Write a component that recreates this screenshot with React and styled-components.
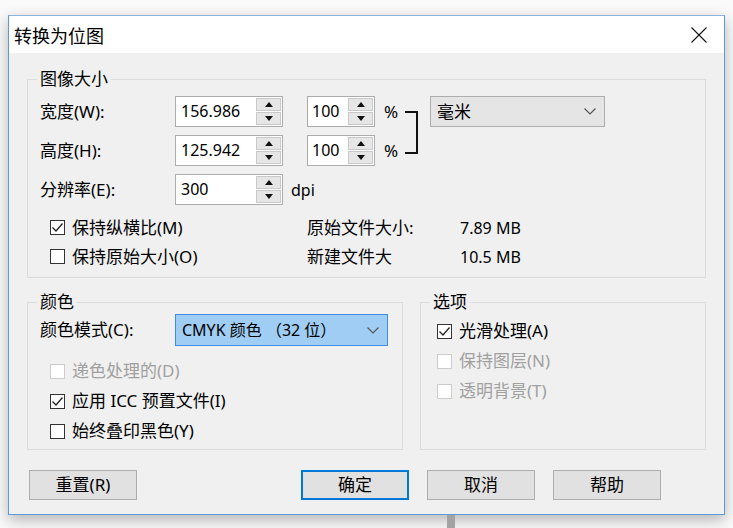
import React from 'react';
import styled, { createGlobalStyle } from 'styled-components';

const GlobalStyle = createGlobalStyle`
  html, body {
    margin: 0;
    padding: 0;
    background: #fafafa;
  }
  body {
    font-family: "Noto Sans", "Noto Sans CJK SC", sans-serif;
    color: #000;
  }
`

const Page = styled.div`
  width: 733px;
  height: 528px;
  overflow: hidden;
  padding-top: 15px;
  box-sizing: border-box;
`

const Dialog = styled.div`
  margin-left: 8px;
  width: 717px;
  box-sizing: border-box;
  border: 1px solid #5a9ad8;
  border-top-color: #8fb2d6;
  background: #f0f0f0;
  box-shadow: 0 5px 14px rgba(0,0,0,0.28);
`

const TitleBar = styled.div`
  height: 37px;
  background: #fff;
  display: flex;
  align-items: center;
  justify-content: space-between;
  padding: 0 17px 0 5px;
`

const Title = styled.div`
  font-family: "Noto Sans CJK SC", sans-serif;
  font-size: 18px;
  line-height: 22px;
`

const Body = styled.div`
  padding: 16px 18px 14px 18px;
  display: flex;
  flex-direction: column;
`

const Group = styled.fieldset`
  margin: 0;
  padding: ${p => p.$pad || '7px 0 6px 12px'};
  border: 1px solid #dcdcdc;
  min-width: 0;
  box-sizing: border-box;
  width: ${p => p.$w}px;
  height: ${p => p.$h ? p.$h + 'px' : 'auto'};
`

const Legend = styled.legend`
  padding: 0 3px;
  margin-left: -3px;
  font-size: 17px;
  line-height: 20px;
`

const SizeGrid = styled.div`
  display: grid;
  grid-template-columns: 135px 132px 77px 21px 25px 175px;
  grid-template-rows: 31px 31px 31px;
  row-gap: 8px;
  align-items: center;
`

const Label = styled.div`
  font-size: ${p => p.$size || 17}px;
  line-height: 20px;
  color: ${p => p.$disabled ? '#a0a0a0' : '#000'};
  white-space: nowrap;
`

const SpinBox = styled.div`
  width: ${p => p.$w}px;
  height: 31px;
  box-sizing: border-box;
  border: 1px solid #acacac;
  background: #fff;
  display: flex;
  align-items: stretch;
`

const SpinText = styled.div`
  flex: 1;
  padding-left: ${p => p.$small ? 4 : 5}px;
  font-size: 16px;
  line-height: 29px;
`

const SpinBtns = styled.div`
  width: 25px;
  margin: 1px;
  display: flex;
  flex-direction: column;
  gap: 1px;
`

const SpinHalf = styled.div`
  flex: 1;
  background: #e6e6e6;
  border: 1px solid #c9c9c9;
  display: flex;
  align-items: center;
  justify-content: center;
`

const Cell = styled.div`
  display: flex;
  align-items: center;
  gap: ${p => p.$gap || 0}px;
  grid-column: ${p => p.$col || 'auto'};
  grid-row: ${p => p.$row || 'auto'};
  align-self: ${p => p.$self || 'center'};
`

const Percent = styled.div`
  font-size: 17px;
  line-height: 20px;
`

const Bracket = styled.div`
  width: 11px;
  height: 39px;
  margin-top: 15px;
  border: 2px solid #111;
  border-left: none;
`

const Select = styled.div`
  width: ${p => p.$w}px;
  height: ${p => p.$h || 31}px;
  box-sizing: border-box;
  border: 1px solid ${p => p.$active ? '#3d8ee2' : '#adadad'};
  background: ${p => p.$active ? '#9fcdf3' : '#e5e5e5'};
  display: flex;
  align-items: center;
  justify-content: space-between;
  padding: 0 8px 0 6px;
  font-size: ${p => p.$size || 17}px;
  line-height: 20px;
  white-space: nowrap;
`

const InfoGrid = styled.div`
  display: grid;
  grid-template-columns: 267px 153px auto;
  grid-auto-rows: 29px;
  align-items: center;
  margin-top: 8px;
`

const CheckRow = styled.div`
  display: flex;
  align-items: center;
  gap: 7px;
  padding-left: ${p => p.$indent ?? 10}px;
  height: ${p => p.$h || 30}px;
`

const Box = styled.span`
  width: 15px;
  height: 15px;
  box-sizing: border-box;
  border: 1px solid ${p => p.$disabled ? '#cccccc' : '#333'};
  background: #fff;
  display: flex;
  align-items: center;
  justify-content: center;
`

const BottomGroups = styled.div`
  display: flex;
  gap: 17px;
  margin-top: 14px;
`

const ModeRow = styled.div`
  display: grid;
  grid-template-columns: 135px auto;
  align-items: center;
  margin-bottom: 10px;
`

const Buttons = styled.div`
  display: flex;
  margin-top: 20px;
  gap: 18px;
  padding-left: 2px;
`

const Button = styled.div`
  width: 108px;
  height: 30px;
  box-sizing: border-box;
  border: ${p => p.$primary ? '2px solid #0078d7' : '1px solid #adadad'};
  background: #e1e1e1;
  display: flex;
  align-items: center;
  justify-content: center;
  font-size: 17px;
  line-height: 20px;
  margin-right: ${p => p.$push ? 146 : 0}px;
`

const Behind = styled.div`
  margin-left: 447px;
  width: 8px;
  height: 40px;
  background: #a3a3a3;
`

const Up = () => (
  <svg width="8" height="5" viewBox="0 0 8 5"><polygon points="4,0 8,5 0,5" fill="#111" /></svg>
)
const Down = () => (
  <svg width="8" height="5" viewBox="0 0 8 5"><polygon points="0,0 8,0 4,5" fill="#111" /></svg>
)

const Spin = ({ value, w, small }) => (
  <SpinBox $w={w}>
    <SpinText $small={small}>{value}</SpinText>
    <SpinBtns>
      <SpinHalf><Up /></SpinHalf>
      <SpinHalf><Down /></SpinHalf>
    </SpinBtns>
  </SpinBox>
)

const Chevron = () => (
  <svg width="12" height="7" viewBox="0 0 12 7">
    <polyline points="0.5,0.5 6,6 11.5,0.5" fill="none" stroke="#555" strokeWidth="1.2" />
  </svg>
)

const Check = ({ checked, disabled, children, indent }) => (
  <CheckRow $indent={indent}>
    <Box $disabled={disabled}>
      {checked && (
        <svg width="13" height="13" viewBox="0 0 13 13">
          <polyline points="1.5,6.5 5,10 11.5,2.5" fill="none" stroke="#222" strokeWidth="1.3" />
        </svg>
      )}
    </Box>
    <Label $disabled={disabled}>{children}</Label>
  </CheckRow>
)

export default function App() {
  return (
    <Page>
      <GlobalStyle />
      <Dialog>
        <TitleBar>
          <Title>转换为位图</Title>
          <svg width="16" height="16" viewBox="0 0 16 16">
            <path d="M0.5 0.5 L15.5 15.5 M15.5 0.5 L0.5 15.5" stroke="#111" strokeWidth="1.1" />
          </svg>
        </TitleBar>
        <Body>
          <Group $w={679}>
            <Legend>图像大小</Legend>
            <SizeGrid>
              <Cell $col="1" $row="1"><Label>宽度(W):</Label></Cell>
              <Cell $col="2" $row="1"><Spin value="156.986" w={108} /></Cell>
              <Cell $col="3" $row="1"><Spin value="100" w={68} small /></Cell>
              <Cell $col="4" $row="1"><Percent>%</Percent></Cell>
              <Cell $col="5" $row="1 / span 2" $self="start"><Bracket /></Cell>
              <Cell $col="6" $row="1"><Select $w={175}>毫米<Chevron /></Select></Cell>

              <Cell $col="1" $row="2"><Label>高度(H):</Label></Cell>
              <Cell $col="2" $row="2"><Spin value="125.942" w={108} /></Cell>
              <Cell $col="3" $row="2"><Spin value="100" w={68} small /></Cell>
              <Cell $col="4" $row="2"><Percent>%</Percent></Cell>

              <Cell $col="1" $row="3"><Label>分辨率(E):</Label></Cell>
              <Cell $col="2 / span 2" $row="3" $gap={8}>
                <Spin value="300" w={108} />
                <Label $size={16}>dpi</Label>
              </Cell>
            </SizeGrid>
            <InfoGrid>
              <Check checked>保持纵横比(M)</Check>
              <Label>原始文件大小:</Label>
              <Label $size={16}>7.89 MB</Label>
              <Check>保持原始大小(O)</Check>
              <Label>新建文件大</Label>
              <Label $size={16}>10.5 MB</Label>
            </InfoGrid>
          </Group>

          <BottomGroups>
            <Group $w={376} $h={158} $pad="2px 0 0 12px">
              <Legend>颜色</Legend>
              <ModeRow>
                <Label>颜色模式(C):</Label>
                <Select $w={213} $h={32} $size={16} $active>
                  <span>CMYK 颜色 （32 位）</span>
                  <Chevron />
                </Select>
              </ModeRow>
              <Check disabled>递色处理的(D)</Check>
              <Check checked>应用 ICC 预置文件(I)</Check>
              <Check>始终叠印黑色(Y)</Check>
            </Group>
            <Group $w={286} $h={158} $pad="4px 0 0 12px">
              <Legend>选项</Legend>
              <Check checked indent={4}>光滑处理(A)</Check>
              <Check disabled indent={4}>保持图层(N)</Check>
              <Check disabled indent={4}>透明背景(T)</Check>
            </Group>
          </BottomGroups>

          <Buttons>
            <Button $push>重置(R)</Button>
            <Button $primary>确定</Button>
            <Button>取消</Button>
            <Button>帮助</Button>
          </Buttons>
        </Body>
      </Dialog>
      <Behind />
    </Page>
  );
}
